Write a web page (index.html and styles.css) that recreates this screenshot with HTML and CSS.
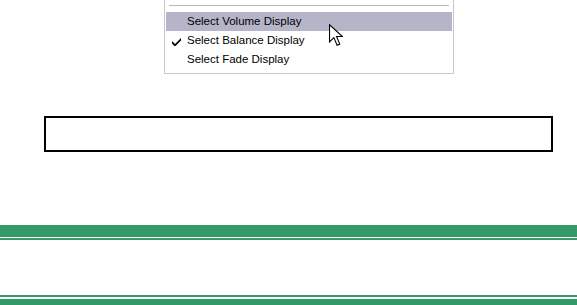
FILE: index.html
```html
<!DOCTYPE html>
<html>
	<head>
		<meta charset="UTF-8">
		<title>Display menu</title>
		<link rel="stylesheet" href="styles.css">
	</head>

	<body>
		<div class="menu">
			<div class="sep"></div>
			<div class="item active">Select Volume Display</div>
			<div class="item">
				<svg class="check" viewBox="0 0 9 8"><path d="M0 3.5l3 3 6-6v2.5l-6 6-3-3z"></path></svg>
				Select Balance Display
			</div>
			<div class="item">Select Fade Display</div>
			<svg class="cursor" viewBox="0 0 13 21">
				<path d="M0.5 0.5v16l4-4 3 7 2.5-1-3-7h5.5z"></path>
			</svg>
		</div>

		<div class="field"></div>

		<div class="band">
			<div class="bar-thick"></div>
			<div class="bar-thin"></div>
		</div>
		<div class="band band-bottom">
			<div class="bar-thin"></div>
			<div class="bar-thick"></div>
		</div>
	</body>

</html>
```

FILE: styles.css
```css
* {
	padding: 0;
	margin: 0;
	box-sizing: border-box;
}

body {
	font-family: "Liberation Sans", Arial, sans-serif;
	background: #fff;
}

.menu {
	position: relative;
	margin-left: 164px;
	width: 290px;
	height: 74px;
	border: 1px solid #c8c8c8;
	border-top: none;
	padding: 5px 1px 3px 1px;
}

.sep {
	height: 1px;
	margin: 0 3px 6px 3px;
	background: #b8b8b8;
}

.item {
	position: relative;
	height: 19px;
	line-height: 19px;
	padding-left: 21px;
	font-size: 11.5px;
	color: #000;
}

.item.active {
	background: #b6b4c8;
}

.check {
	position: absolute;
	left: 6px;
	top: 6px;
	width: 9px;
	height: 9px;
	fill: #000;
}

.cursor {
	position: absolute;
	left: 164px;
	top: 24px;
	width: 14px;
	height: 23px;
	fill: #fff;
	stroke: #000;
	stroke-width: 1;
}

.field {
	margin: 42px 0 0 44px;
	width: 509px;
	height: 36px;
	border: 2px solid #000;
}

.band {
	margin-top: 73px;
}

.band-bottom {
	margin-top: 55px;
}

.bar-thick {
	height: 12px;
	background: #339966;
}

.bar-thin {
	height: 2px;
	margin-top: 1px;
	background: #339966;
}

.band-bottom .bar-thin {
	margin-top: 0;
}

.band-bottom .bar-thick {
	height: 6px;
	margin-top: 2px;
}
```
